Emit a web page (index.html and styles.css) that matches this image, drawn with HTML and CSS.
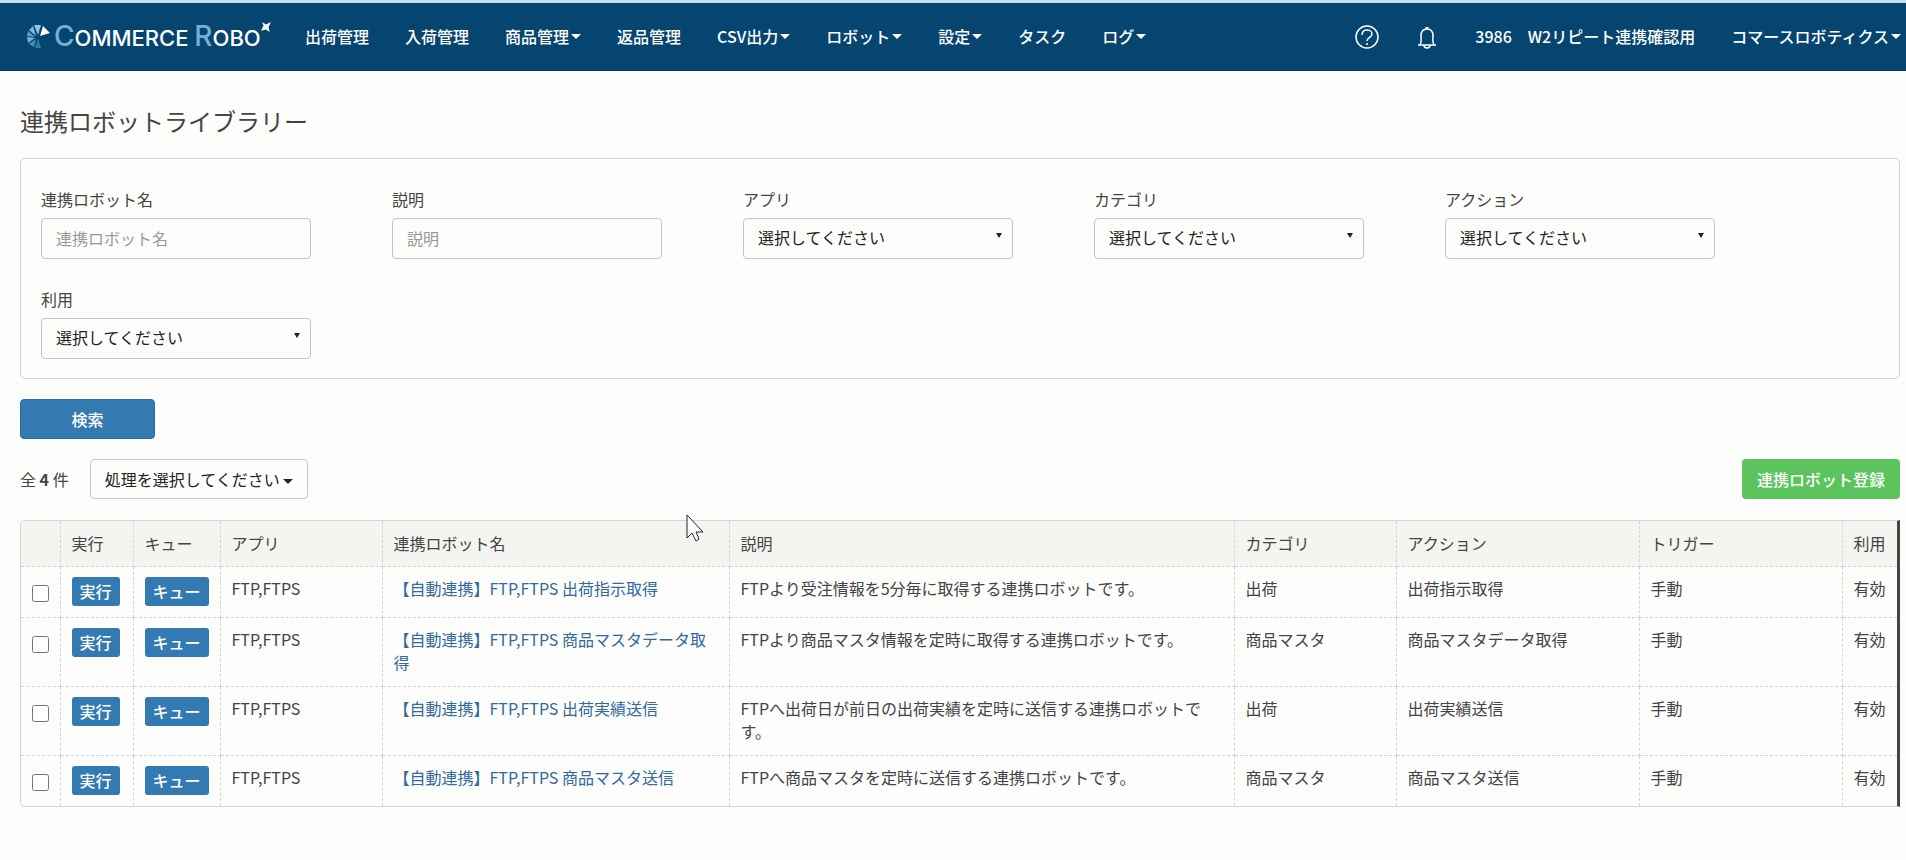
FILE: index.html
```html
<!DOCTYPE html>
<html lang="ja">
<head>
    <meta charset="UTF-8">
    <meta name="viewport" content="width=device-width, initial-scale=1.0">
    <title>連携ロボットライブラリー | COMMERCE ROBO</title>
    <link rel="stylesheet" href="styles.css">
</head>
<body>
<header class="navbar">
    <a class="logo" href="#">
        <svg class="logo-mark" viewBox="0 0 24 24" width="24" height="24" aria-hidden="true">
            <path d="M14 11 17 1 24 8Z" fill="#fff"/>
            <path d="M12 10 8 0 15 0Z" fill="#8cc4e6"/>
            <path d="M10 11 3 5 7 1Z" fill="#7db8dc"/>
            <path d="M9 12 1 11 2 6Z" fill="#5c9fc6"/>
            <path d="M9 13 2 18 1 12Z" fill="#7db0cf"/>
            <path d="M10 14 8 22 3 19Z" fill="#4f8fb0"/>
            <path d="M12 14 15 23 9 23Z" fill="#1b8a94"/>
        </svg>
        <span class="logo-text"><b>C</b>OMMERCE <b>R</b>OBO</span>
        <svg class="logo-star" viewBox="0 0 8 8" width="10" height="10" aria-hidden="true">
            <path d="M1 0 4 2 8 0 6 4 7 8 4 6 0 7 2 3Z" fill="#fff"/>
        </svg>
    </a>
    <nav class="menu">
        <a href="#">出荷管理</a>
        <a href="#">入荷管理</a>
        <a href="#">商品管理<span class="caret"></span></a>
        <a href="#">返品管理</a>
        <a href="#">CSV出力<span class="caret"></span></a>
        <a href="#">ロボット<span class="caret"></span></a>
        <a href="#">設定<span class="caret"></span></a>
        <a href="#">タスク</a>
        <a href="#">ログ<span class="caret"></span></a>
    </nav>
    <div class="menu menu-right">
        <a href="#" aria-label="ヘルプ">
            <svg viewBox="0 0 24 24" width="24" height="24" fill="none" stroke="#fff" stroke-width="1.5">
                <circle cx="12" cy="12" r="11"/>
                <path d="M7 10C7 6 9 5 12 5s5 2 5 4c0 4-5 3-5 7"/>
                <path d="M12 18v2"/>
            </svg>
        </a>
        <a href="#" aria-label="お知らせ">
            <svg class="bell" viewBox="-2 0 24 24" width="24" height="24" fill="none" stroke="#fff" stroke-width="1.5">
                <path d="M1 20h18M3 20c2-3 1-5 1-9 0-4 2-7 6-7s6 3 6 7c0 4-1 6 1 9"/>
                <path d="M7 20a3 3 0 0 0 6 0"/>
                <path d="M10 4V2" stroke-width="3"/>
            </svg>
        </a>
        <a href="#">3986　W2リピート連携確認用</a>
        <a href="#">コマースロボティクス<span class="caret"></span></a>
    </div>
</header>

<main class="container">
    <h1>連携ロボットライブラリー</h1>

    <form>
        <div class="search-box">
            <div class="field">
                <label for="robot-name">連携ロボット名</label>
                <input type="text" id="robot-name" placeholder="連携ロボット名">
            </div>
            <div class="field">
                <label for="description">説明</label>
                <input type="text" id="description" placeholder="説明">
            </div>
            <div class="field">
                <label for="app">アプリ</label>
                <select id="app"><option>選択してください</option></select>
            </div>
            <div class="field">
                <label for="category">カテゴリ</label>
                <select id="category"><option>選択してください</option></select>
            </div>
            <div class="field">
                <label for="action">アクション</label>
                <select id="action"><option>選択してください</option></select>
            </div>
            <div class="field">
                <label for="usage">利用</label>
                <select id="usage"><option>選択してください</option></select>
            </div>
        </div>
        <button type="button" class="btn btn-primary btn-search">検索</button>
    </form>

    <div class="toolbar">
        <span class="count">全 <b>4</b> 件</span>
        <button type="button" class="btn btn-default">処理を選択してください<span class="caret"></span></button>
        <button type="button" class="btn btn-success">連携ロボット登録</button>
    </div>

    <div class="table-wrap">
        <table>
            <colgroup>
                <col class="col-check">
                <col class="col-run">
                <col class="col-queue">
                <col class="col-app">
                <col class="col-name">
                <col>
                <col class="col-category">
                <col class="col-action">
                <col class="col-trigger">
                <col class="col-usage">
            </colgroup>
            <thead>
                <tr>
                    <th></th>
                    <th>実行</th>
                    <th>キュー</th>
                    <th>アプリ</th>
                    <th>連携ロボット名</th>
                    <th>説明</th>
                    <th>カテゴリ</th>
                    <th>アクション</th>
                    <th>トリガー</th>
                    <th>利用</th>
                </tr>
            </thead>
            <tbody>
                <tr>
                    <td class="check"><input type="checkbox" aria-label="出荷指示取得を選択"></td>
                    <td class="run"><button type="button" class="btn-small">実行</button></td>
                    <td class="run"><button type="button" class="btn-small">キュー</button></td>
                    <td>FTP,FTPS</td>
                    <td><a href="#">【自動連携】FTP,FTPS 出荷指示取得</a></td>
                    <td>FTPより受注情報を5分毎に取得する連携ロボットです。</td>
                    <td>出荷</td>
                    <td>出荷指示取得</td>
                    <td>手動</td>
                    <td>有効</td>
                </tr>
                <tr>
                    <td class="check"><input type="checkbox" aria-label="商品マスタデータ取得を選択"></td>
                    <td class="run"><button type="button" class="btn-small">実行</button></td>
                    <td class="run"><button type="button" class="btn-small">キュー</button></td>
                    <td>FTP,FTPS</td>
                    <td><a href="#">【自動連携】FTP,FTPS 商品マスタデータ取得</a></td>
                    <td>FTPより商品マスタ情報を定時に取得する連携ロボットです。</td>
                    <td>商品マスタ</td>
                    <td>商品マスタデータ取得</td>
                    <td>手動</td>
                    <td>有効</td>
                </tr>
                <tr>
                    <td class="check"><input type="checkbox" aria-label="出荷実績送信を選択"></td>
                    <td class="run"><button type="button" class="btn-small">実行</button></td>
                    <td class="run"><button type="button" class="btn-small">キュー</button></td>
                    <td>FTP,FTPS</td>
                    <td><a href="#">【自動連携】FTP,FTPS 出荷実績送信</a></td>
                    <td>FTPへ出荷日が前日の出荷実績を定時に送信する連携ロボットです。</td>
                    <td>出荷</td>
                    <td>出荷実績送信</td>
                    <td>手動</td>
                    <td>有効</td>
                </tr>
                <tr>
                    <td class="check"><input type="checkbox" aria-label="商品マスタ送信を選択"></td>
                    <td class="run"><button type="button" class="btn-small">実行</button></td>
                    <td class="run"><button type="button" class="btn-small">キュー</button></td>
                    <td>FTP,FTPS</td>
                    <td><a href="#">【自動連携】FTP,FTPS 商品マスタ送信</a></td>
                    <td>FTPへ商品マスタを定時に送信する連携ロボットです。</td>
                    <td>商品マスタ</td>
                    <td>商品マスタ送信</td>
                    <td>手動</td>
                    <td>有効</td>
                </tr>
            </tbody>
        </table>
    </div>
</main>

<svg class="cursor" viewBox="0 0 18 28" width="18" height="28" aria-hidden="true">
    <path d="M1 1V24L6 19 10 27 13 25 10 18H17Z" fill="#fff" stroke="#223"/>
</svg>
</body>
</html>
```
FILE: styles.css
```css
* {
    box-sizing: border-box;
}

body {
    margin: 0;
    font-family: "Noto Sans CJK JP", sans-serif;
    font-size: 16px;
    line-height: 23px;
    color: #444;
    background-color: #fdfdfb;
}

button, input, select {
    font: inherit;
}

/* navbar */
.navbar {
    display: flex;
    align-items: center;
    height: 71px;
    padding: 0 5px 0 26px;
    background-color: #05456f;
    border-top: 3px solid #c9dbea;
    border-bottom: 1px solid #0a3a5c;
}

.logo {
    display: flex;
    align-items: center;
    width: 261px;
    color: #fff;
    text-decoration: none;
}

.logo-text {
    margin-left: 4px;
    font-family: Inter, sans-serif;
    font-size: 22px;
    font-weight: 500;
    line-height: 28px;
    white-space: nowrap;
}

.logo-text b {
    font-size: 28px;
    font-weight: 500;
    color: #74afd8;
}

.logo-star {
    align-self: flex-start;
}

.menu {
    display: flex;
    align-items: center;
}

.menu a {
    display: flex;
    align-items: center;
    padding: 0 18px;
    font-weight: 500;
    color: #fff;
    white-space: nowrap;
    text-decoration: none;
}

.menu-right {
    margin-left: auto;
}

.menu-right a:last-child {
    padding-right: 0;
}

.caret {
    display: inline-block;
    margin-left: 3px;
    border-top: 5px solid;
    border-right: 5px solid transparent;
    border-left: 5px solid transparent;
    vertical-align: middle;
}

.menu .caret {
    margin-left: 2px;
}

/* search form */
.container {
    padding: 32px 6px 0 20px;
}

h1 {
    margin: 0 0 19px;
    font-size: 24px;
    font-weight: 400;
    line-height: 36px;
}

.search-box {
    display: grid;
    grid-template-columns: repeat(auto-fill, 270px);
    gap: 29px 81px;
    padding: 29px 20px 19px;
    border: 1px solid #d3d3d8;
    border-radius: 5px;
}

.field label {
    display: block;
    margin-bottom: 7px;
}

.field input, .field select {
    display: block;
    width: 100%;
    height: 41px;
    padding: 5px 14px 7px;
    color: #222;
    background-color: transparent;
    border: 1px solid #c4c4ce;
    border-radius: 4px;
}

.field input::placeholder {
    color: #999;
}

.field select {
    appearance: none;
    background-image: url("data:image/svg+xml,%3Csvg xmlns='http://www.w3.org/2000/svg' width='6' height='5'%3E%3Cpath d='M0 0h6L3 5z' fill='%23222'/%3E%3C/svg%3E");
    background-repeat: no-repeat;
    background-position: right 10px top 14px;
}

/* buttons */
.btn {
    height: 40px;
    padding: 0 14px;
    font-weight: 500;
    color: #fff;
    white-space: nowrap;
    border: 1px solid transparent;
    border-radius: 4px;
    cursor: pointer;
}

.btn-primary {
    background-color: #337ab3;
    border-color: #2e6da4;
}

.btn-search {
    width: 135px;
    margin-top: 20px;
}

.btn-default {
    font-weight: 400;
    color: #222;
    background-color: transparent;
    border-color: #c8c8c8;
}

.btn-success {
    margin-left: auto;
    background-color: #5cc45c;
}

.btn-small {
    display: block;
    height: 29px;
    padding: 0 8px;
    line-height: 29px;
    color: #fff;
    font-weight: 500;
    white-space: nowrap;
    background-color: #337ab3;
    border: 0;
    border-radius: 3px;
    cursor: pointer;
}

.toolbar {
    display: flex;
    align-items: center;
    gap: 21px;
    margin: 20px 0 21px;
}

.count b {
    font-weight: 700;
}

/* result table */
.table-wrap {
    overflow: hidden;
    border: 1px solid #d3d3d8;
    border-right: 3px solid #444;
    border-radius: 5px 0 0 5px;
}

table {
    width: 100%;
    table-layout: fixed;
    border-collapse: collapse;
}

th, td {
    padding: 10px 12px 12px 11px;
    text-align: left;
    vertical-align: top;
    border-right: 1px dashed #d3d3d8;
    border-bottom: 1px dashed #d3d3d8;
}

th {
    padding-top: 11px;
    padding-bottom: 11px;
    font-weight: 400;
    background-color: #f4f4f0;
}

th:last-child, td:last-child {
    padding-right: 0;
    white-space: nowrap;
    border-right: 0;
}

tbody tr:last-child td {
    border-bottom: 0;
}

td a {
    color: #33699c;
    text-decoration: none;
}

.run {
    padding-right: 8px;
    padding-bottom: 11px;
}

.check {
    padding-right: 0;
    padding-left: 0;
}

.check input {
    display: block;
    width: 17px;
    height: 17px;
    margin: 8px auto 0;
}

.col-check { width: 39px; }
.col-run { width: 73px; }
.col-queue { width: 87px; }
.col-app { width: 162px; }
.col-name { width: 347px; }
.col-category { width: 162px; }
.col-action { width: 243px; }
.col-trigger { width: 203px; }
.col-usage { width: 55px; }

/* pointer over the page */
.cursor {
    position: absolute;
    top: 514px;
    left: 686px;
}
```
